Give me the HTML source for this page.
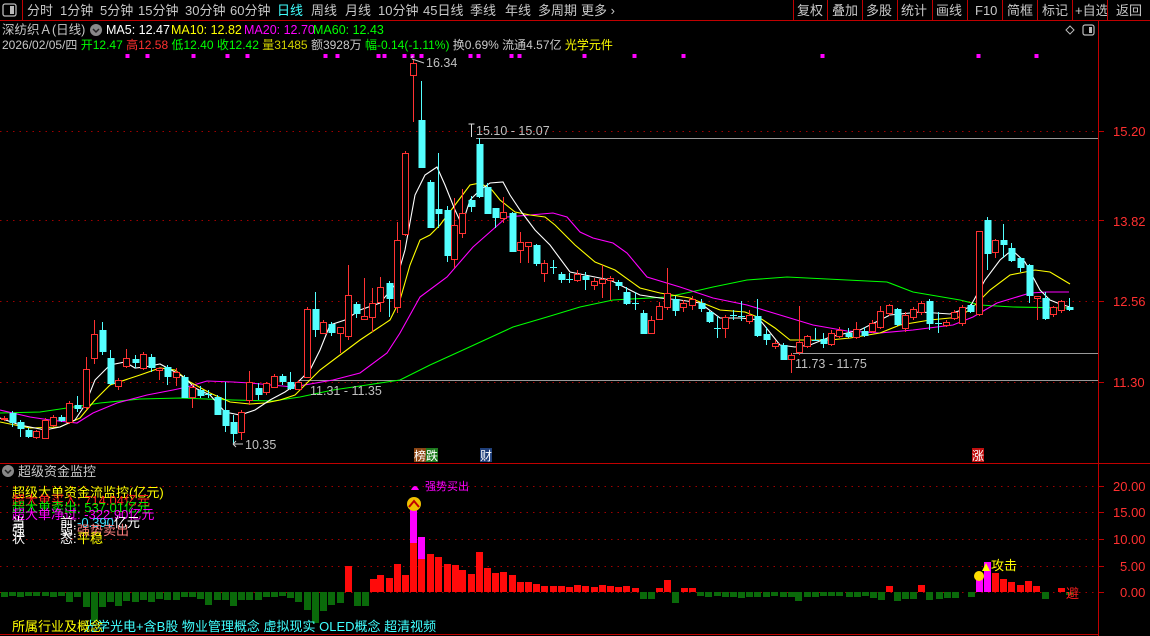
<!DOCTYPE html>
<html><head><meta charset="utf-8">
<style>
html,body{margin:0;padding:0;background:#000;width:1150px;height:636px;overflow:hidden}
svg{display:block}
text{font-family:"Liberation Sans","Noto Sans CJK SC",sans-serif}
</style></head><body>
<svg id="s" width="1150" height="636" xmlns="http://www.w3.org/2000/svg">
<rect width="1150" height="636" fill="#000"/>
<g font-size="13" fill="#c8c8c8">
<rect x="3" y="4" width="13" height="12" rx="2" fill="none" stroke="#bbb" stroke-width="1.3"/>
<rect x="10" y="6" width="4" height="8" fill="#bbb"/>
<line x1="22.5" y1="0" x2="22.5" y2="20" stroke="#c00000"/>
<text x="27" y="15">分时</text><text x="60" y="15">1分钟</text><text x="100" y="15">5分钟</text>
<text x="138" y="15">15分钟</text><text x="185" y="15">30分钟</text><text x="230" y="15">60分钟</text>
<text x="277" y="15" fill="#40ffff">日线</text><text x="311" y="15">周线</text><text x="345" y="15">月线</text>
<text x="378" y="15">10分钟</text><text x="423" y="15">45日线</text><text x="470" y="15">季线</text>
<text x="505" y="15">年线</text><text x="538" y="15">多周期</text><text x="581" y="15">更多 ›</text>
<text x="797" y="15">复权</text><text x="832" y="15">叠加</text><text x="866" y="15">多股</text>
<text x="901" y="15">统计</text><text x="936" y="15">画线</text><text x="975" y="15">F10</text>
<text x="1007" y="15">简框</text><text x="1042" y="15">标记</text><text x="1075" y="15">+自选</text><text x="1116" y="15">返回</text>
</g>
<g stroke="#c00000" stroke-width="1">
<line x1="793.5" y1="0" x2="793.5" y2="20"/><line x1="827.5" y1="0" x2="827.5" y2="20"/>
<line x1="862.5" y1="0" x2="862.5" y2="20"/><line x1="897.5" y1="0" x2="897.5" y2="20"/>
<line x1="932.5" y1="0" x2="932.5" y2="20"/><line x1="967.5" y1="0" x2="967.5" y2="20"/>
<line x1="1002.5" y1="0" x2="1002.5" y2="20"/><line x1="1037.5" y1="0" x2="1037.5" y2="20"/>
<line x1="1072.5" y1="0" x2="1072.5" y2="20"/><line x1="1107.5" y1="0" x2="1107.5" y2="20"/>
<line x1="0" y1="20.5" x2="1150" y2="20.5"/>
<line x1="1098.5" y1="20" x2="1098.5" y2="636"/>
<line x1="0" y1="463.5" x2="1150" y2="463.5"/>
<line x1="0" y1="634.5" x2="1098" y2="634.5"/>
</g>
<g font-size="12.5">
<text x="2" y="34" fill="#c8c8c8">深纺织Ａ(日线)</text>
<circle cx="96" cy="30" r="6" fill="#888"/><path d="M93 29 L96 32 L99 29" stroke="#222" stroke-width="1.5" fill="none"/>
<text x="106" y="34" fill="#fff">MA5: 12.47</text>
<text x="171" y="34" fill="#ffff00">MA10: 12.82</text>
<text x="244" y="34" fill="#ff00ff">MA20: 12.70</text>
<text x="313" y="34" fill="#00ff00">MA60: 12.43</text>
<text x="2" y="49" font-size="12" fill="#c8c8c8">2026/02/05/四 <tspan fill="#00ff00">开12.47</tspan> <tspan fill="#ff3030">高12.58</tspan> <tspan fill="#00ff00">低12.40</tspan> <tspan fill="#00ff00">收12.42</tspan> <tspan fill="#d0d000">量31485</tspan> 额3928万 <tspan fill="#00ff00">幅-0.14(-1.11%)</tspan> 换0.69% 流通4.57亿 <tspan fill="#ffff00">光学元件</tspan></text>
<path d="M1070 26 L1074 30 L1070 34 L1066 30 Z" fill="none" stroke="#bbb"/>
<rect x="1083" y="25" width="11" height="10" rx="2" fill="none" stroke="#bbb" stroke-width="1.2"/><rect x="1089" y="27" width="3" height="6" fill="#bbb"/>
</g>
<g id="dots" fill="#ff00ff"></g>
<g stroke="#a00000" stroke-dasharray="1.5 5" stroke-width="1">
<line x1="0" y1="131.5" x2="1098" y2="131.5"/><line x1="0" y1="220.5" x2="1098" y2="220.5"/>
<line x1="0" y1="301.5" x2="1098" y2="301.5"/><line x1="0" y1="382.5" x2="1098" y2="382.5"/>
<line x1="0" y1="486.5" x2="1098" y2="486.5"/><line x1="0" y1="512.5" x2="1098" y2="512.5"/>
<line x1="0" y1="539.5" x2="1098" y2="539.5"/><line x1="0" y1="566.5" x2="1098" y2="566.5"/>
<line x1="0" y1="592.5" x2="1098" y2="592.5"/>
</g>
<g stroke="#999" stroke-width="1">
<line x1="476" y1="138.5" x2="1098" y2="138.5"/>
<line x1="793" y1="353.5" x2="1098" y2="353.5"/>
<line x1="300" y1="380.5" x2="1098" y2="380.5"/>
</g>
<g font-size="13" fill="#ff3030">
<text x="1113" y="136">15.20</text><text x="1113" y="226">13.82</text><text x="1113" y="306">12.56</text><text x="1113" y="387">11.30</text>
<text x="1113" y="491">20.00</text><text x="1113" y="517">15.00</text><text x="1113" y="544">10.00</text><text x="1120" y="571">5.00</text><text x="1120" y="597">0.00</text>
</g>
<g stroke="#c00000"><line x1="1098" y1="131.5" x2="1104" y2="131.5"/><line x1="1098" y1="220.5" x2="1104" y2="220.5"/><line x1="1098" y1="301.5" x2="1104" y2="301.5"/><line x1="1098" y1="382.5" x2="1104" y2="382.5"/>
<line x1="1098" y1="486.5" x2="1104" y2="486.5"/><line x1="1098" y1="512.5" x2="1104" y2="512.5"/><line x1="1098" y1="539.5" x2="1104" y2="539.5"/><line x1="1098" y1="566.5" x2="1104" y2="566.5"/><line x1="1098" y1="592.5" x2="1104" y2="592.5"/></g>
<g id="bars"></g>
<g id="ma" fill="none" stroke-width="1.1"></g>
<g id="cand"></g>
<g font-size="12.5" fill="#c0c0c0">
<text x="426" y="67">16.34</text><path d="M411 58 L413 56 M412 59 L424 63" stroke="#ccc" fill="none"/>
<path d="M468.5 124 L474.5 124 M471.5 124 L471.5 137" stroke="#ddd" fill="none"/>
<text x="476" y="135">15.10 - 15.07</text>
<text x="245" y="449">10.35</text><path d="M233 444 L243 444 M233 444 L236 441 M233 444 L236 447" stroke="#ccc" fill="none"/>
<text x="310" y="395">11.31 - 11.35</text>
<text x="795" y="368">11.73 - 11.75</text>
</g>
<g font-size="12" fill="#fff">
<rect x="414" y="448" width="12" height="14" fill="#8b4513"/><text x="414" y="460">榜</text>
<rect x="426" y="448" width="12" height="14" fill="#1e7a1e"/><text x="426" y="460">跌</text>
<rect x="480" y="448" width="12" height="14" fill="#1f3f7a"/><text x="480" y="460">财</text>
<rect x="972" y="448" width="12" height="14" fill="#c01010"/><text x="972" y="460">涨</text>
</g>
<circle cx="8" cy="471" r="6" fill="#888"/><path d="M5 470 L8 473 L11 470" stroke="#222" stroke-width="1.5" fill="none"/>
<text x="18" y="476" font-size="13" fill="#c8c8c8">超级资金监控</text>
<g font-size="13">
<text x="12" y="497" fill="#ffff00">超级大单资金流监控(亿元)</text>
<text x="12" y="505" fill="#ff2020">超大单买入: 714.04亿元</text>
<text x="12" y="512" fill="#00ee00">超大单卖出: 537.01亿元</text>
<text x="12" y="519" fill="#ff00ff">超大单净过: -322.90亿元</text>
<text x="12" y="527" fill="#fff">当</text><text x="60" y="527" fill="#fff">前:</text><text x="77" y="527" fill="#40e0ff">-0.390<tspan fill="#fff">亿元</tspan></text>
<text x="12" y="535" fill="#fff">强</text><text x="60" y="535" fill="#fff">弱:</text><text x="77" y="535" fill="#ff8080">强势卖出</text>
<text x="12" y="543" fill="#fff">状</text><text x="60" y="543" fill="#fff">态:</text><text x="77" y="543" fill="#ffff00">平稳</text>
<text x="84" y="631" fill="#40ffff">光学光电+含B股 物业管理概念 虚拟现实 OLED概念 超清视频</text>
<text x="12" y="631" fill="#ffff00">所属行业及概念</text>
<text x="425" y="490" font-size="11" fill="#ff00ff">强势买出</text>
<path d="M411 490 Q415 482 419 490 Z" fill="#ff00ff"/>
<circle cx="414" cy="504" r="7" fill="#f0c000"/><path d="M409 507 L414 501 L419 507" stroke="#c00000" stroke-width="2" fill="none"/>
<circle cx="979" cy="576" r="5" fill="#ffdd00"/>
<path d="M982 571 L986 563 L990 571 Z" fill="#ffff00"/>
<text x="991" y="570" fill="#ffff00">攻击</text>
<text x="1066" y="598" fill="#ff2020">避</text>
</g>
</svg>
<script>
const NS="http://www.w3.org/2000/svg";
function el(p,t,a){const e=document.createElementNS(NS,t);for(const k in a)e.setAttribute(k,a[k]);p.appendChild(e);return e;}
const C=[[4,'r',418,419,416,421],[12,'c',413,422,411,427],[20,'c',422,428,420,437],[28,'c',430,436,428,438],[36,'r',431,437,430,439],[45,'r',420,438,418,439],[53,'r',417,425,415,427],[61,'c',417,420,415,422],[69,'r',403,422,401,424],[77,'c',405,408,396,412],[86,'r',369,407,357,410],[94,'r',334,358,320,364],[102,'c',330,351,322,355],[110,'c',358,383,350,385],[118,'r',380,386,378,390],[126,'r',358,366,349,368],[135,'c',359,362,355,368],[143,'r',354,368,352,370],[151,'c',357,367,354,372],[159,'r',368,370,368,380],[167,'c',367,376,365,385],[176,'r',372,377,368,386],[184,'c',377,397,375,398],[192,'r',387,397,385,408],[200,'c',390,395,386,398],[208,'x',394,394,390,398],[217,'c',397,414,395,415],[225,'c',410,425,382,432],[233,'c',422,433,415,445],[241,'r',412,432,410,440],[249,'r',382,400,371,405],[258,'c',388,394,383,400],[266,'r',383,392,382,395],[274,'r',376,387,374,388],[282,'c',376,381,374,385],[290,'c',382,388,372,390],[298,'r',382,389,380,390],[307,'r',309,377,307,378],[315,'c',309,329,292,337],[323,'r',322,333,320,334],[331,'c',324,332,322,336],[340,'r',327,333,327,353],[348,'r',295,336,265,340],[356,'c',304,313,302,318],[364,'r',316,319,278,320],[372,'r',303,317,288,332],[380,'r',287,302,277,312],[389,'c',283,298,281,317],[397,'r',240,307,222,313],[405,'r',153,234,151,236],[413,'r',63,75,60,122],[421,'c',120,167,81,168],[430,'c',182,227,180,228],[438,'c',209,213,153,228],[447,'c',210,255,206,262],[454,'r',225,259,198,268],[462,'r',213,233,189,238],[471,'c',200,206,196,212],[479,'c',144,196,138,198],[487,'c',187,213,183,214],[495,'c',208,217,208,228],[503,'r',212,218,197,223],[512,'c',213,251,212,252],[520,'r',242,250,232,263],[528,'r',242,246,242,263],[536,'c',245,263,244,266],[544,'r',263,273,260,282],[553,'x',267,267,260,274],[561,'c',274,279,272,283],[569,'x',279,279,273,283],[577,'r',274,280,270,282],[585,'c',276,279,272,290],[594,'r',281,285,278,290],[602,'r',279,283,265,298],[610,'r',278,280,276,300],[618,'c',282,285,280,290],[626,'c',292,303,287,305],[635,'x',303,303,292,310],[643,'c',313,333,310,334],[651,'r',320,333,316,334],[659,'r',306,319,302,320],[667,'r',293,307,268,310],[675,'c',299,310,296,316],[683,'r',303,307,300,312],[692,'r',299,305,296,310],[701,'c',303,308,299,312],[709,'c',312,321,310,323],[717,'x',328,328,316,338],[725,'r',317,328,315,338],[733,'x',315,315,310,320],[741,'x',316,316,301,321],[749,'r',315,321,310,324],[757,'c',316,335,299,337],[766,'c',334,339,327,345],[775,'r',343,346,340,349],[783,'c',345,359,343,360],[791,'r',355,359,353,373],[799,'r',342,352,306,355],[807,'r',336,346,335,348],[815,'x',340,340,328,341],[823,'c',339,343,333,348],[831,'r',333,344,330,346],[839,'r',330,336,327,338],[848,'c',333,336,328,338],[856,'r',329,337,322,339],[864,'c',331,335,327,337],[872,'r',323,331,320,333],[880,'r',311,327,306,329],[889,'r',305,313,304,316],[897,'c',309,324,308,326],[905,'r',315,328,312,332],[913,'r',309,317,307,320],[921,'r',303,312,301,315],[929,'c',301,323,299,330],[938,'x',323,323,312,333],[946,'r',322,325,320,327],[954,'r',312,318,310,320],[962,'r',307,323,305,326],[970,'c',305,311,304,313],[979,'r',231,314,231,316],[987,'c',220,253,217,270],[995,'r',240,252,239,258],[1003,'c',240,244,224,258],[1011,'c',248,260,243,262],[1020,'c',258,267,257,272],[1029,'c',265,295,264,303],[1037,'r',296,298,296,320],[1045,'c',298,318,292,320],[1053,'r',307,314,306,317],[1061,'r',301,310,300,313],[1069,'c',307,309,298,311]];
const cg=document.getElementById('cand');
for(const [x,t,a,b,wt,wb] of C){
 const col=t==='r'?'#ff3232':'#54ffff';
 el(cg,'line',{x1:x+.5,y1:wt,x2:x+.5,y2:wb,stroke:col});
 if(t==='x'){el(cg,'line',{x1:x-3,y1:a+.5,x2:x+4,y2:a+.5,stroke:'#54ffff'});continue;}
 const h=Math.max(b-a,1);
 if(t==='r'){el(cg,'rect',{x:x-2.5,y:a+.5,width:6,height:h,fill:'#000',stroke:col});}
 else el(cg,'rect',{x:x-2.5,y:a,width:7,height:h+1,fill:col});
}
const MA={"#fff":[[0,418],[20,425],[45,430],[60,427],[75,420],[85,405],[95,380],[110,365],[125,362],[135,368],[145,367],[160,364],[175,372],[185,378],[195,388],[210,395],[225,412],[240,415],[255,410],[270,400],[285,392],[295,385],[310,370],[320,350],[330,325],[345,320],[360,310],[380,303],[395,285],[405,250],[415,195],[425,175],[437,167],[445,185],[455,210],[462,225],[470,200],[480,190],[490,183],[503,182],[510,195],[520,210],[535,230],[550,245],[570,272],[590,276],[610,280],[640,295],[660,298],[680,300],[700,303],[720,318],[740,318],[760,320],[780,345],[795,347],[810,345],[830,337],[860,330],[890,315],[920,312],[950,314],[970,307],[985,280],[1000,260],[1012,250],[1025,262],[1040,290],[1050,300],[1060,304],[1070,307]],
"#ffff00":[[0,422],[30,428],[60,427],[80,418],[95,400],[110,385],[140,375],[160,368],[175,370],[190,382],[210,393],[230,402],[250,404],[265,403],[280,400],[295,395],[305,385],[320,370],[340,355],[360,340],[390,320],[400,300],[410,265],[420,240],[430,235],[440,225],[455,205],[470,185],[480,183],[492,190],[500,200],[515,212],[530,215],[545,217],[555,225],[575,245],[595,262],[615,270],[640,288],[660,293],[690,298],[720,310],[745,312],[760,318],[775,328],[790,340],[810,340],[830,340],[850,338],[880,333],[900,325],[930,320],[960,317],[975,305],[990,290],[1010,275],[1025,272],[1035,270],[1050,272],[1060,278],[1070,284]],
"#ff00ff":[[0,410],[30,417],[50,420],[77,423],[93,413],[117,403],[147,395],[173,390],[187,387],[207,381],[233,382],[250,383],[293,387],[333,380],[360,373],[387,353],[400,333],[420,297],[447,277],[473,247],[507,217],[530,215],[553,213],[567,217],[580,232],[593,238],[613,243],[627,253],[647,277],[680,287],[713,298],[747,305],[780,315],[813,325],[847,331],[880,333],[913,330],[953,325],[973,317],[997,303],[1030,293],[1047,292],[1069,292]],
"#00ff00":[[0,413],[40,412],[67,408],[100,403],[140,399],[180,398],[233,400],[273,401],[300,397],[333,390],[367,385],[400,380],[430,365],[463,350],[513,327],[547,317],[580,307],[613,300],[667,297],[700,290],[713,287],[747,280],[787,277],[847,280],[887,282],[913,292],[960,300],[980,305],[1013,307],[1069,308]]};
const mg=document.getElementById('ma');
for(const c of ["#00ff00","#ff00ff","#ffff00","#fff"]) el(mg,'polyline',{points:MA[c].map(p=>p.join(',')).join(' '),stroke:c});
const dg=document.getElementById('dots');
for(const x of [127,147,193,227,247,325,337,378,384,404,412,421,470,478,511,519,584,634,683,822,978,1036]) el(dg,'rect',{x:x-1.5,y:54,width:4,height:4});
const B0=592;
const G=[[4,597],[12,596],[20,597],[28,596],[36,596],[45,596],[53,597],[61,596],[69,602],[77,597],[86,607],[94,621],[102,607],[110,602],[118,606],[126,601],[135,602],[143,600],[151,602],[159,599],[167,600],[176,600],[184,597],[192,597],[200,599],[208,605],[217,600],[225,600],[233,606],[241,600],[249,600],[258,600],[266,597],[274,597],[282,596],[290,598],[298,602],[307,610],[315,623],[323,611],[331,605],[340,603],[357,606],[365,606],[643,599],[651,599],[675,603],[700,596],[708,597],[717,596],[725,597],[733,597],[741,598],[749,597],[757,597],[766,597],[774,596],[783,597],[791,597],[798,601],[807,597],[815,597],[823,596],[831,596],[839,596],[849,597],[857,597],[865,596],[873,598],[881,600],[897,601],[905,599],[913,599],[929,600],[939,599],[947,598],[955,598],[971,597],[1045,599],[1069,595]];
const R=[[348,566],[373,579],[380,575],[389,578],[397,564],[405,575],[413,543],[421,559],[430,554],[438,557],[447,564],[455,565],[462,570],[471,574],[479,552],[487,568],[495,573],[503,572],[512,575],[520,582],[528,582],[536,584],[544,586],[553,586],[561,586],[569,587],[577,585],[585,586],[594,587],[602,585],[610,586],[618,587],[626,586],[635,588],[659,588],[667,580],[684,588],[692,588],[889,586],[921,585],[995,573],[1003,579],[1011,582],[1020,585],[1028,581],[1036,586],[1061,588]];
const bg=document.getElementById('bars');
for(const [x,y] of G) el(bg,'rect',{x:x-3,y:B0,width:7,height:y-B0,fill:'#0a6a0a'});
for(const [x,y] of R) el(bg,'rect',{x:x-3,y:y,width:7,height:B0-y,fill:'#ff0a0a'});
el(bg,'rect',{x:410,y:510,width:7,height:33,fill:'#ff00ff'});
el(bg,'rect',{x:418,y:537,width:7,height:22,fill:'#ff00ff'});
el(bg,'rect',{x:976,y:578,width:7,height:14,fill:'#ff00ff'});
el(bg,'rect',{x:984,y:562,width:7,height:30,fill:'#ff00ff'});
</script>
</body></html>
